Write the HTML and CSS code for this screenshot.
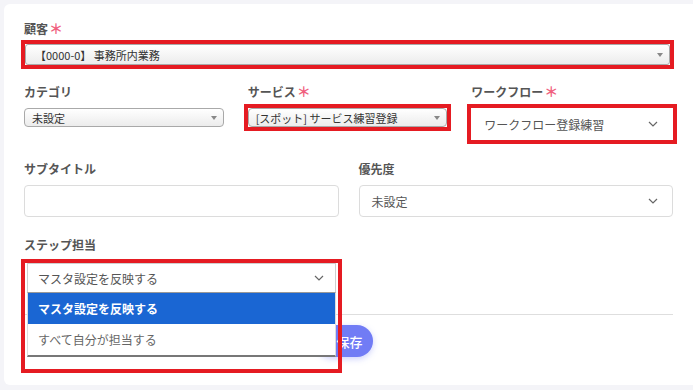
FILE: index.html
```html
<!DOCTYPE html>
<html lang="ja">
<head>
<meta charset="utf-8">
<link rel="stylesheet" href="styles.css">
</head>
<body>
<div class="card">
  <div class="field">
    <div class="label">顧客<span class="req">＊</span></div>
    <div class="legacy wide mark"><span>【0000-0】 事務所内業務</span><i class="tri"></i></div>
  </div>

  <div class="row three">
    <div class="field">
      <div class="label">カテゴリ</div>
      <div class="legacy small"><span>未設定</span><i class="tri"></i></div>
    </div>
    <div class="field">
      <div class="label">サービス<span class="req">＊</span></div>
      <div class="legacy small mark"><span>[スポット] サービス練習登録</span><i class="tri"></i></div>
    </div>
    <div class="field">
      <div class="label">ワークフロー<span class="req">＊</span></div>
      <div class="modern mark"><span>ワークフロー登録練習</span>
        <svg class="chev" width="10" height="6" viewBox="0 0 10 6"><path d="M1 1l4 4 4-4" fill="none" stroke="#666" stroke-width="1.2"/></svg>
      </div>
    </div>
  </div>

  <div class="row two">
    <div class="field">
      <div class="label">サブタイトル</div>
      <div class="input"></div>
    </div>
    <div class="field">
      <div class="label">優先度</div>
      <div class="modern"><span>未設定</span>
        <svg class="chev" width="10" height="6" viewBox="0 0 10 6"><path d="M1 1l4 4 4-4" fill="none" stroke="#666" stroke-width="1.2"/></svg>
      </div>
    </div>
  </div>

  <div class="row two step-row">
    <div class="field">
      <div class="label">ステップ担当</div>
      <div class="step">
        <div class="step-select"><span>マスタ設定を反映する</span>
          <svg class="chev" width="10" height="6" viewBox="0 0 10 6"><path d="M1 1l4 4 4-4" fill="none" stroke="#666" stroke-width="1.2"/></svg>
        </div>
        <div class="menu">
          <div class="opt active">マスタ設定を反映する</div>
          <div class="opt">すべて自分が担当する</div>
        </div>
      </div>
    </div>
  </div>

  <div class="divider"></div>
  <div class="footer">
    <button class="save">保存</button>
  </div>
</div>
</body>
</html>
```
FILE: styles.css
```css
* { box-sizing: border-box; }
html, body { margin: 0; padding: 0; }
body {
  background: #f4f4f8;
  font-family: "Noto Sans CJK JP", "Noto Sans", sans-serif;
  overflow: hidden;
  width: 693px;
  height: 390px;
  padding: 4px 0 0 4px;
}
.card {
  background: #fff;
  border-radius: 6px 0 0 6px;
  width: 689px;
  padding: 17px 20px 28px 20px;
}
.label {
  font-size: 12px;
  line-height: 16px;
  font-weight: 700;
  color: #555;
  margin-bottom: 7px;
}
.req {
  color: #f0607e;
  font-weight: 700;
  font-size: 14px;
  line-height: 12px;
  margin-left: 1px;
}
.row { display: grid; margin-top: 19px; }
.row.three { grid-template-columns: repeat(3, 1fr); column-gap: 22px; }
.row.three .label { margin-bottom: 8px; }
.row.two { grid-template-columns: 1fr 1fr; column-gap: 20px; margin-top: 21px; }
.row.two .label { margin-bottom: 8px; }
.row.step-row { margin-top: 20px; }
.row.step-row .label { margin-bottom: 10px; }

.mark { position: relative; }
.mark::after {
  content: "";
  position: absolute;
  top: -5px; left: -5px; right: -5px; bottom: -5px;
  border: 4px solid #e51b22;
  pointer-events: none;
}

.legacy {
  display: flex;
  align-items: center;
  justify-content: space-between;
  border: 1px solid #a9a9a9;
  border-radius: 4px;
  background: linear-gradient(#ffffff, #ececec);
  font-size: 11px;
  color: #333;
  padding: 0 6px 0 7px;
}
.legacy.wide { height: 21px; margin: 0 3px 0 1px; border-radius: 3px; padding-left: 9px; }
.legacy.small { height: 19px; margin-top: 1px; margin-right: 2px; }
.tri {
  width: 0; height: 0;
  border-left: 3px solid transparent;
  border-right: 3px solid transparent;
  border-top: 4px solid #888;
}
.modern {
  display: flex;
  align-items: center;
  justify-content: space-between;
  height: 32px;
  border: 1px solid #dcdcdc;
  border-radius: 4px;
  padding: 0 14px 0 12px;
  font-size: 12px;
  color: #555;
}
.modern.mark { border-color: #fff; }
.input {
  height: 32px;
  border: 1px solid #dcdcdc;
  border-radius: 4px;
}
.step {
  position: relative;
  margin: 0 3px 0 3px;
}
.step::after {
  content: "";
  position: absolute;
  left: -6px; right: -6px; top: -4px;
  height: 106px;
  border: 4px solid #e51b22;
  pointer-events: none;
}
.step-select {
  display: flex;
  align-items: center;
  justify-content: space-between;
  height: 30px;
  border: 1px solid #cfcfcf;
  border-bottom: 1px solid #999;
  padding: 0 11px 0 10px;
  font-size: 12px;
  color: #555;
  background: #fff;
}
.menu {
  position: absolute;
  top: 30px; left: 0; right: 0;
  background: #fff;
  border-bottom: 2px solid #777;
  border-left: 1px solid #ddd;
  border-right: 1px solid #ddd;
  z-index: 2;
}
.opt {
  height: 31px;
  line-height: 31px;
  padding-left: 10px;
  font-size: 12px;
  color: #666;
}
.opt.active { background: #1a66d3; color: #fff; font-weight: 700; }
.divider { height: 1px; background: #dedede; margin-top: 21px; }
.footer { display: flex; margin-top: 10px; }
.save {
  margin-left: 292px;
  height: 32px;
  width: 57px;
  border: none;
  border-radius: 16px;
  background: #717cf5;
  color: #fff;
  font-family: inherit;
  font-size: 13px;
  font-weight: 500;
  padding: 0 0 0 10px;
  box-shadow: 0 2px 6px rgba(113, 124, 245, 0.35);
}
```
